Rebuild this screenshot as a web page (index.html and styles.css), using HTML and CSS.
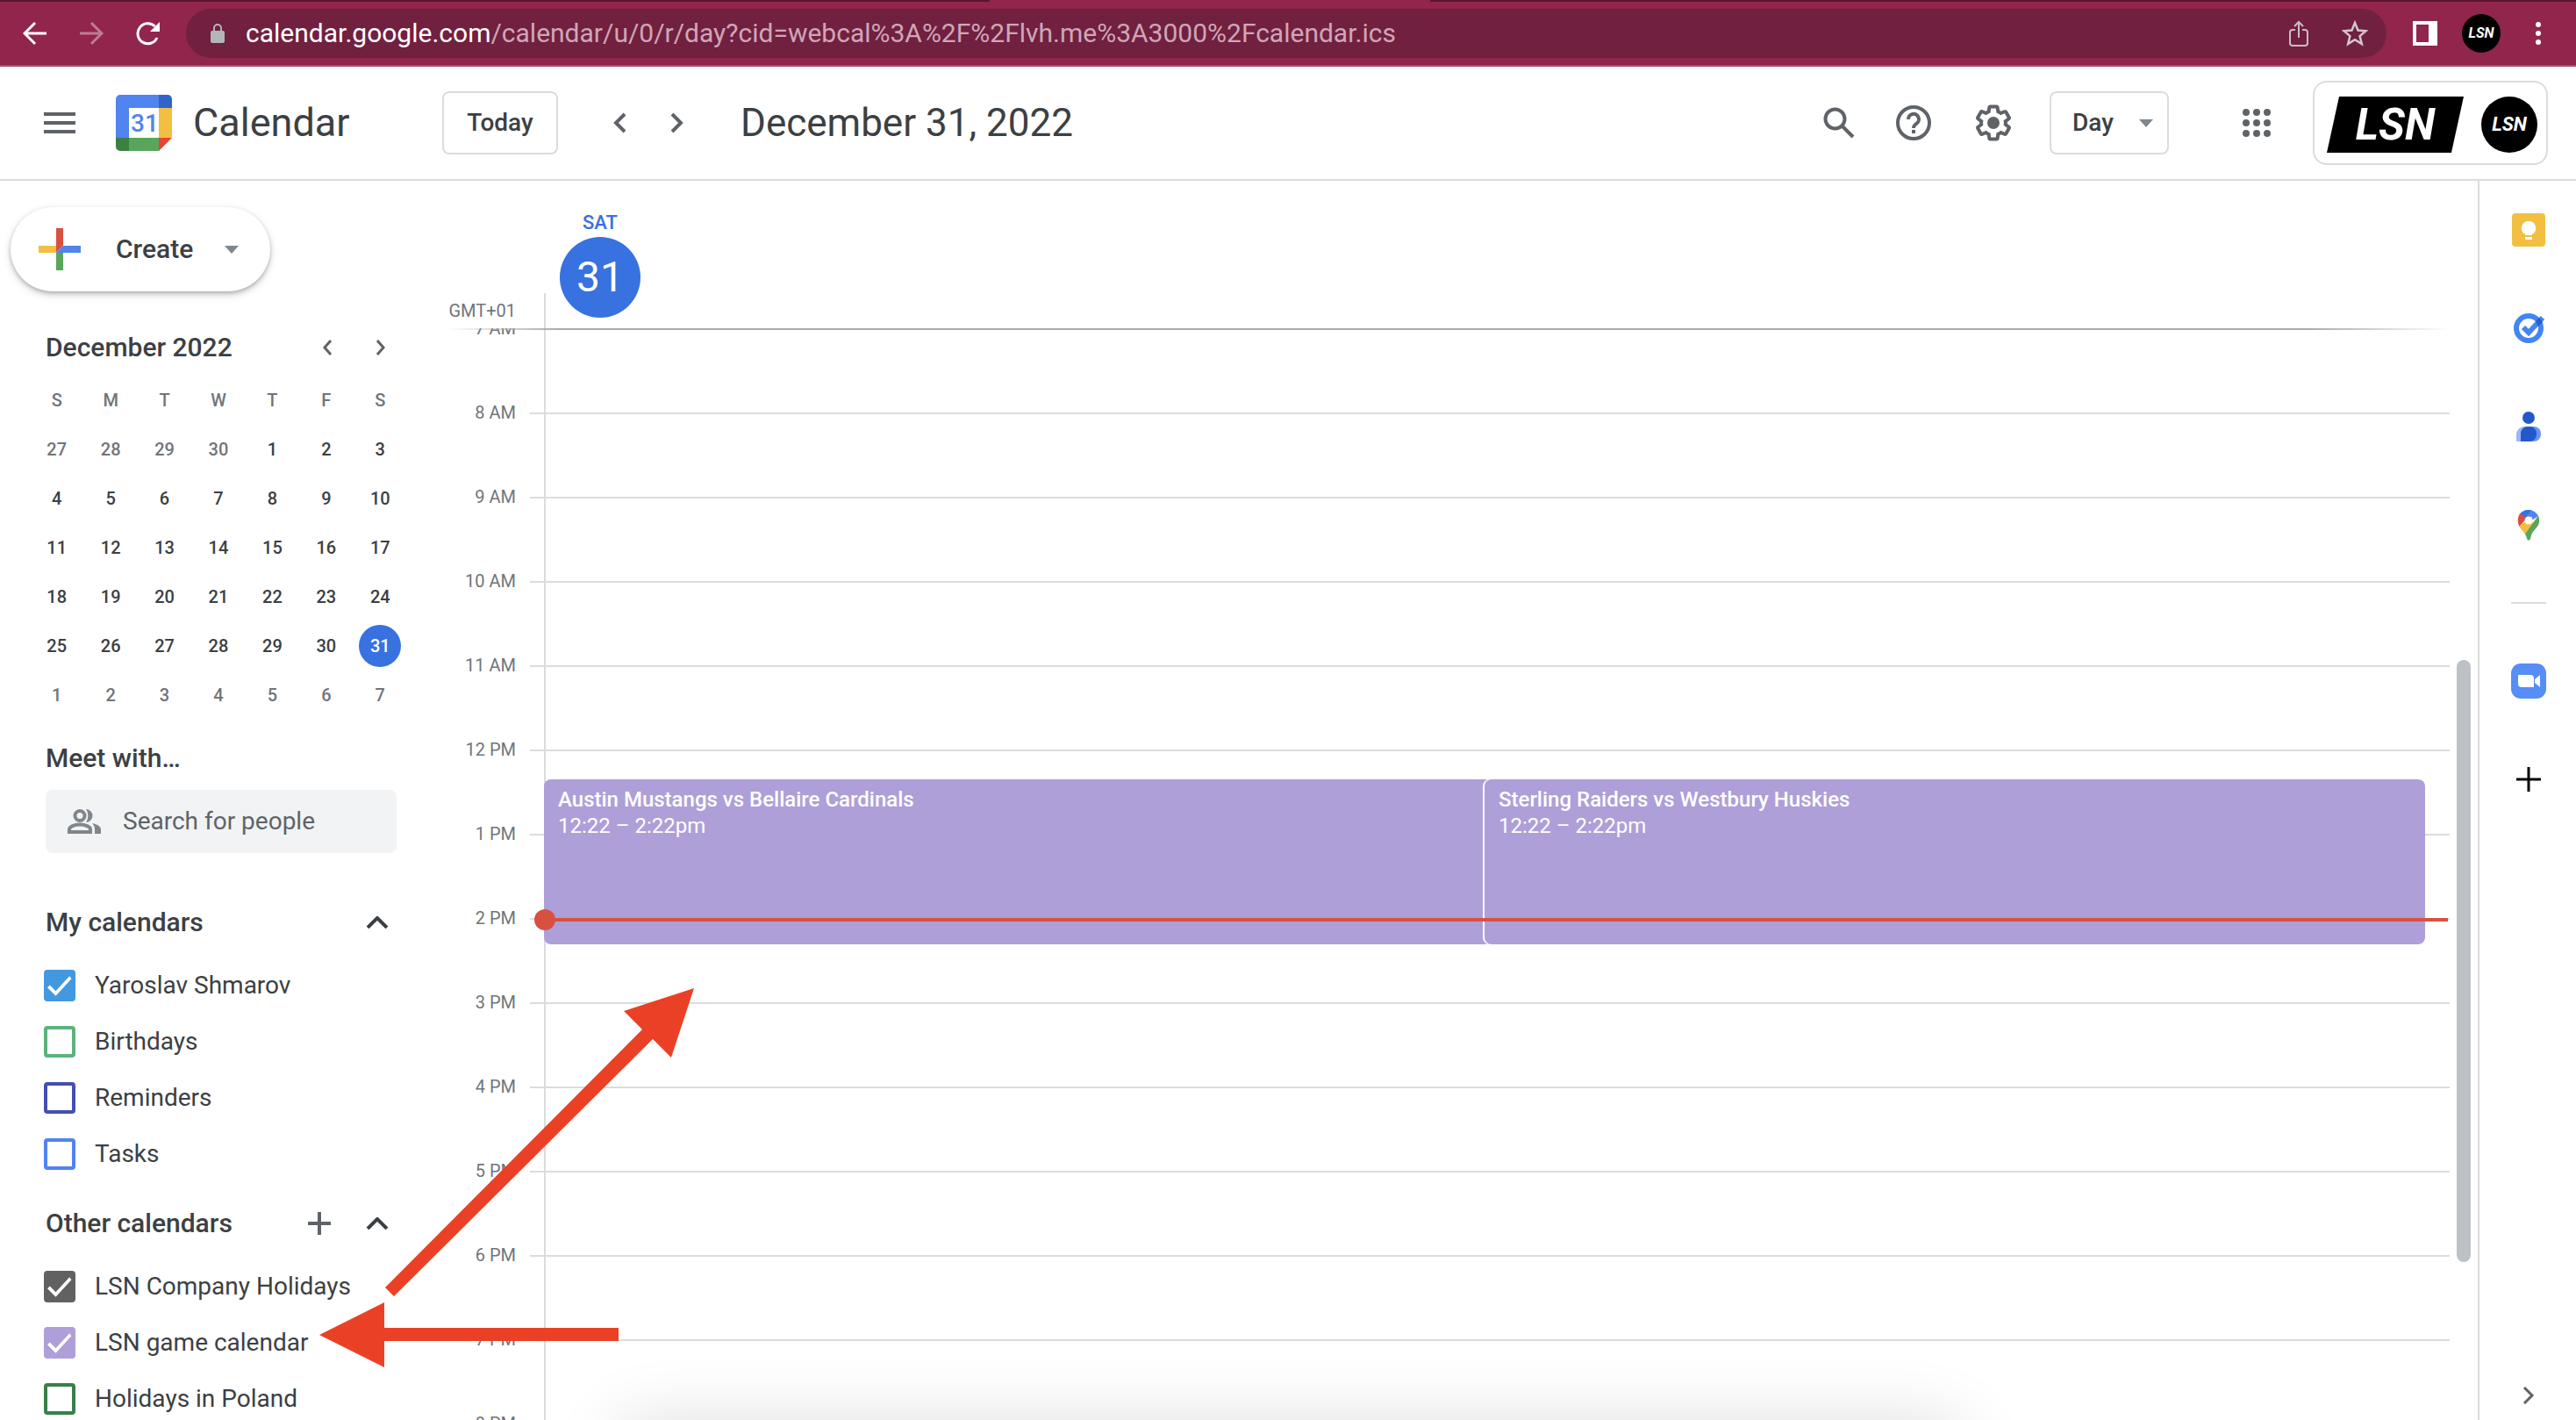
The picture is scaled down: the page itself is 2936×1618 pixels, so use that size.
FILE: index.html
```html
<!DOCTYPE html>
<html lang="en">
<head>
<meta charset="utf-8">
<title>Calendar - December 31, 2022</title>
<link rel="stylesheet" href="styles.css">
</head>
<body>
<div class="browser-bar">
  <nav class="browser-nav" aria-label="Browser">
    <button class="icon-btn" aria-label="Back"><svg width="28" height="28" viewBox="0 0 28 28" fill="none" stroke="#fff" stroke-width="3"><path d="M27 14H3M14 2L2 14l12 12"/></svg></button>
    <button class="icon-btn" aria-label="Forward"><svg width="28" height="28" viewBox="0 0 28 28" fill="none" stroke="#bd7c94" stroke-width="3"><path d="M1 14h24M14 2l12 12-12 12"/></svg></button>
    <button class="icon-btn" aria-label="Reload"><svg width="28" height="28" viewBox="0 0 28 28"><path d="M25 19a11.500 11.500 0 1 1-2.500-13" fill="none" stroke="#fff" stroke-width="3"/><path d="M28 1v11H17z" fill="#fff"/></svg></button>
  </nav>
  <div class="omnibox">
    <svg width="16" height="22" viewBox="0 0 16 22"><rect y="8" width="16" height="14" rx="2" fill="#b3b5ba"/><path d="M4 9V5a4 4 0 0 1 8 0v4" fill="none" stroke="#b3b5ba" stroke-width="2"/></svg>
    <div class="url" role="textbox" aria-label="Address"><span class="url-host">calendar.google.com</span>/calendar/u/0/r/day?cid=webcal%3A%2F%2Flvh.me%3A3000%2Fcalendar.ics</div>
    <button class="icon-btn" aria-label="Share"><svg width="22" height="30" viewBox="0 0 22 30" fill="none" stroke="#c9bcc3" stroke-width="2"><path d="M7 11H4a3 3 0 0 0-3 3v12a3 3 0 0 0 3 3h14a3 3 0 0 0 3-3V14a3 3 0 0 0-3-3h-3M11 20V2M6 7l5-5 5 5"/></svg></button>
    <button class="icon-btn" aria-label="Bookmark"><svg width="30" height="30" viewBox="0 0 30 30" fill="none" stroke="#d3c6cd" stroke-width="2.500"><path d="M15 3l3.500 8.500 9 .7-6.900 5.900 2.200 8.900-7.800-4.800L7.200 27l2.200-8.900-6.900-5.900 9-.7z"/></svg></button>
  </div>
  <div class="browser-actions">
    <button class="icon-btn" aria-label="Side panel"><svg width="28" height="28" viewBox="0 0 28 28"><path fill="#fff" fill-rule="evenodd" d="M0 0h28v28H0zM4 4v20h14V4z"/></svg></button>
    <button class="avatar avatar-small" aria-label="Profile">LSN</button>
    <button class="icon-btn" aria-label="Menu"><svg width="6" height="28" viewBox="0 0 6 28" fill="#fff"><circle cx="3" cy="4" r="3"/><circle cx="3" cy="14" r="3"/><circle cx="3" cy="24" r="3"/></svg></button>
  </div>
</div>

<header class="app-header">
  <button class="icon-btn menu-btn" aria-label="Main menu"><svg width="36" height="24" viewBox="0 0 36 24" fill="#5f6368"><path d="M0 0h36v4H0zM0 10h36v4H0zM0 20h36v4H0z"/></svg></button>
  <a class="brand" href="#">
    <svg width="64" height="64" viewBox="0 0 64 64"><path d="M5 0h44v15H15v34H0V5a5 5 0 0 1 5-5z" fill="#5084ee"/><path d="M49 0h10a5 5 0 0 1 5 5v10H49z" fill="#3063cc"/><path d="M49 15h15v34H49z" fill="#f2bf42"/><path d="M15 49h34v15H15z" fill="#58a65c"/><path d="M0 49h15v15H5a5 5 0 0 1-5-5z" fill="#3d8142"/><path d="M49 49h15L49 64z" fill="#e44535"/><path d="M15 15h34v34H15z" fill="#fff"/><text x="33" y="42" text-anchor="middle" class="brand-day">31</text></svg>
    <span>Calendar</span>
  </a>
  <button class="outline-btn">Today</button>
  <div class="pager">
    <button class="icon-btn" aria-label="Previous day"><svg width="16" height="24" viewBox="0 0 16 24" fill="none" stroke="#5f6368" stroke-width="4"><path d="M14 2L4 12l10 10"/></svg></button>
    <button class="icon-btn" aria-label="Next day"><svg width="16" height="24" viewBox="0 0 16 24" fill="none" stroke="#5f6368" stroke-width="4"><path d="M2 2l10 10L2 22"/></svg></button>
  </div>
  <h1 class="date-title">December 31, 2022</h1>
  <div class="tools">
    <button class="icon-btn" aria-label="Search"><svg width="36" height="36" viewBox="0 0 36 36" fill="none" stroke="#5f6368" stroke-width="4"><circle cx="13.500" cy="13.500" r="11"/><path d="M21 21l13 13"/></svg></button>
    <button class="icon-btn" aria-label="Support"><svg width="40" height="40" viewBox="0 0 40 40"><circle cx="20" cy="20" r="18" fill="none" stroke="#5f6368" stroke-width="4"/><path d="M14 16a6 6 0 1 1 9 5c-2 1.500-3 2.500-3 5" fill="none" stroke="#5f6368" stroke-width="4"/><path d="M18 28h4v4h-4z" fill="#5f6368"/></svg></button>
    <button class="icon-btn settings-btn" aria-label="Settings"><svg width="48" height="48" viewBox="0 0 24 24" fill="#5f6368"><path d="M13.850 22.250h-3.700c-.74 0-1.360-.54-1.450-1.270l-.27-1.890c-.27-.14-.53-.29-.79-.46l-1.800.72c-.7.260-1.470-.03-1.810-.65L2.200 15.530c-.35-.66-.2-1.440.36-1.880l1.530-1.190c-.01-.15-.02-.3-.02-.46 0-.15.010-.31.020-.46l-1.520-1.190c-.59-.45-.74-1.260-.37-1.880l1.850-3.190c.34-.62 1.110-.9 1.790-.63l1.810.73c.26-.17.520-.32.780-.46l.27-1.910c.09-.7.710-1.250 1.440-1.250h3.700c.74 0 1.360.54 1.450 1.270l.27 1.890c.27.140.53.290.79.460l1.800-.72c.71-.26 1.480.03 1.820.65l1.840 3.180c.36.660.2 1.440-.36 1.880l-1.520 1.190c.01.150.02.3.020.46s-.01.310-.02.460l1.520 1.190c.56.450.72 1.230.37 1.860l-1.860 3.220c-.34.620-1.110.9-1.800.63l-1.800-.72c-.26.170-.52.320-.78.460l-.27 1.910c-.1.680-.72 1.220-1.460 1.220zm-3.230-2h2.760l.37-2.550.53-.22c.44-.18.880-.44 1.340-.78l.45-.34 2.380.96 1.380-2.400-2.030-1.580.07-.56c.03-.26.060-.51.060-.78s-.03-.53-.06-.78l-.07-.56 2.030-1.580-1.390-2.400-2.390.96-.45-.35c-.42-.32-.87-.58-1.330-.77l-.52-.22-.37-2.550h-2.760l-.37 2.550-.53.210c-.44.190-.88.440-1.340.79l-.45.330-2.380-.95-1.390 2.390 2.030 1.580-.07.560a7 7 0 0 0-.06.790c0 .26.020.53.060.78l.07.560-2.030 1.580 1.380 2.400 2.390-.96.450.35c.43.330.86.580 1.330.77l.53.220z"/><circle cx="12" cy="12" r="3.500"/></svg></button>
    <div class="view-select"><select aria-label="View"><option>Day</option></select><span class="caret"></span></div>
    <button class="icon-btn apps-btn" aria-label="Google apps"><svg width="32" height="32" viewBox="0 0 32 32" fill="#5f6368"><circle cx="4" cy="4" r="4"/><circle cx="16" cy="4" r="4"/><circle cx="28" cy="4" r="4"/><circle cx="4" cy="16" r="4"/><circle cx="16" cy="16" r="4"/><circle cx="28" cy="16" r="4"/><circle cx="4" cy="28" r="4"/><circle cx="16" cy="28" r="4"/><circle cx="28" cy="28" r="4"/></svg></button>
    <div class="account">
      <span class="org-logo">LSN</span>
      <button class="avatar" aria-label="Google account">LSN</button>
    </div>
  </div>
</header>

<div class="workspace">
  <aside class="sidebar">
    <button class="create-btn">
      <svg width="48" height="48" viewBox="0 0 48 48"><path d="M20 0h8v20l-8 8z" fill="#d85140"/><path d="M0 20h20v8H0z" fill="#f2bf42"/><path d="M20 28h8v20h-8z" fill="#58a65c"/><path d="M28 20h20v8H20z" fill="#5084ee"/></svg>
      <span>Create</span><span class="caret"></span>
    </button>

    <section class="mini">
      <div class="mini-head">
        <h2 class="side-title">December 2022</h2>
        <button class="icon-btn" aria-label="Previous month"><svg width="12" height="18" viewBox="0 0 12 18" fill="none" stroke="#5f6368" stroke-width="3"><path d="M10 1L3 9l7 8"/></svg></button>
        <button class="icon-btn" aria-label="Next month"><svg width="12" height="18" viewBox="0 0 12 18" fill="none" stroke="#5f6368" stroke-width="3"><path d="M2 1l7 8-7 8"/></svg></button>
      </div>
      <table class="month">
        <thead><tr><th>S</th><th>M</th><th>T</th><th>W</th><th>T</th><th>F</th><th>S</th></tr></thead>
        <tbody>
          <tr><td class="dim">27</td><td class="dim">28</td><td class="dim">29</td><td class="dim">30</td><td>1</td><td>2</td><td>3</td></tr>
          <tr><td>4</td><td>5</td><td>6</td><td>7</td><td>8</td><td>9</td><td>10</td></tr>
          <tr><td>11</td><td>12</td><td>13</td><td>14</td><td>15</td><td>16</td><td>17</td></tr>
          <tr><td>18</td><td>19</td><td>20</td><td>21</td><td>22</td><td>23</td><td>24</td></tr>
          <tr><td>25</td><td>26</td><td>27</td><td>28</td><td>29</td><td>30</td><td><span class="today">31</span></td></tr>
          <tr><td class="dim">1</td><td class="dim">2</td><td class="dim">3</td><td class="dim">4</td><td class="dim">5</td><td class="dim">6</td><td class="dim">7</td></tr>
        </tbody>
      </table>
    </section>

    <section class="meet">
      <h2 class="side-title"><label for="people">Meet with…</label></h2>
      <div class="people-field">
        <svg width="38" height="28" viewBox="0 0 38 28"><g fill="none" stroke="#80868b" stroke-width="4"><circle cx="14" cy="7.500" r="5.500"/><path d="M2 26v-3c0-3 6-5.500 12-5.500S26 20 26 23v3z"/></g><path d="M21 0a7.500 7.500 0 0 1 0 15c3-4 3-11 0-15zM28 16c5 1 10 3.500 10 7v5h-7v-5c0-3-1-5-3-7z" fill="#80868b"/></svg>
        <input id="people" type="text" placeholder="Search for people">
      </div>
    </section>

    <section class="cal-group">
      <div class="group-head">
        <h2 class="side-title">My calendars</h2>
        <button class="icon-btn" aria-label="Collapse my calendars"><svg width="26" height="14" viewBox="0 0 26 14" fill="none" stroke="#3c4043" stroke-width="4"><path d="M2 13L13 2l11 11"/></svg></button>
      </div>
      <label class="cal-row"><input class="blue" type="checkbox" checked>Yaroslav Shmarov</label>
      <label class="cal-row"><input class="green" type="checkbox">Birthdays</label>
      <label class="cal-row"><input class="indigo" type="checkbox">Reminders</label>
      <label class="cal-row"><input class="sky" type="checkbox">Tasks</label>
    </section>

    <section class="cal-group">
      <div class="group-head">
        <h2 class="side-title">Other calendars</h2>
        <button class="icon-btn" aria-label="Add other calendars"><svg width="28" height="28" viewBox="0 0 28 28" fill="#5f6368"><path d="M12 1h4v26h-4zM1 12h26v4H1z"/></svg></button>
        <button class="icon-btn" aria-label="Collapse other calendars"><svg width="26" height="14" viewBox="0 0 26 14" fill="none" stroke="#3c4043" stroke-width="4"><path d="M2 13L13 2l11 11"/></svg></button>
      </div>
      <label class="cal-row"><input class="graphite" type="checkbox" checked>LSN Company Holidays</label>
      <label class="cal-row"><input class="lavender" type="checkbox" checked>LSN game calendar</label>
      <label class="cal-row"><input class="forest" type="checkbox">Holidays in Poland</label>
    </section>
  </aside>

  <main class="day-view">
    <div class="day-head">
      <span class="zone">GMT+01</span>
      <div class="day-name"><span>SAT</span><strong>31</strong></div>
    </div>
    <div class="scroller">
      <ol class="hours">
        <li><span>7 AM</span></li>
        <li><span>8 AM</span></li>
        <li><span>9 AM</span></li>
        <li><span>10 AM</span></li>
        <li><span>11 AM</span></li>
        <li><span>12 PM</span></li>
        <li><span>1 PM</span></li>
        <li><span>2 PM</span></li>
        <li><span>3 PM</span></li>
        <li><span>4 PM</span></li>
        <li><span>5 PM</span></li>
        <li><span>6 PM</span></li>
        <li><span>7 PM</span></li>
        <li><span>8 PM</span></li>
      </ol>
      <div class="events">
        <article class="event"><h3>Austin Mustangs vs Bellaire Cardinals</h3><p>12:22 – 2:22pm</p></article>
        <article class="event"><h3>Sterling Raiders vs Westbury Huskies</h3><p>12:22 – 2:22pm</p></article>
      </div>
      <div class="now-line"></div>
      <div class="scroll-thumb"></div>
    </div>
    <div class="toast-shadow"></div>
  </main>

  <aside class="side-panel">
    <button class="icon-btn" aria-label="Keep"><svg width="40" height="40" viewBox="0 0 40 40"><rect x="1" y="1" width="38" height="38" rx="4" fill="#f2bf42"/><path d="M20 10a8 8 0 0 0-4 15v1h8v-1a8 8 0 0 0-4-15zM16 28h8v3h-8z" fill="#fff"/></svg></button>
    <button class="icon-btn" aria-label="Tasks"><svg width="40" height="40" viewBox="0 0 40 40"><circle cx="20" cy="20" r="14" fill="none" stroke="#4285f4" stroke-width="6"/><path d="M14 19l6 6L36 8" fill="none" stroke="#4285f4" stroke-width="6"/><path d="M28 12l4-4 4 5-5 5z" fill="#2a5fc8"/></svg></button>
    <button class="icon-btn" aria-label="Contacts"><svg width="40" height="40" viewBox="0 0 40 40"><circle cx="20" cy="10" r="7" fill="#2358cb"/><path d="M6 37v-8a9 9 0 0 1 9-9h6v17z" fill="#9db6f6"/><path d="M18 20h8a8 8 0 0 1 8 8v1a8 8 0 0 1-8 8h-8z" fill="#6a94f3"/><path d="M11 37v-9a8 8 0 0 1 8-8h2a8 8 0 0 1 8 8v1a8 8 0 0 1-8 8z" fill="#2358cb"/></svg></button>
    <button class="icon-btn" aria-label="Maps"><svg width="40" height="40" viewBox="0 0 40 40"><path d="M9.500 8C12 5 16 3 20 3c5 0 9 3 11 7L19 18z" fill="#5084ee"/><path d="M11 7c2-2.500 5-4 9-4h3l-9 12z" fill="#3871e0"/><path d="M10.500 7l7 6-8 9C7 17 7 11 10.500 7z" fill="#d85140"/><path d="M9.500 22L24 10l1 11-9 10c-2-4-5-6-6.500-9z" fill="#f2bf42"/><path d="M31 9.500c3 7 0 12-4 16-3 3-4 6-5 10-1 3-3 3-4 0-.5-2-1-3-2-5z" fill="#58a65c"/><circle cx="20" cy="15" r="4.500" fill="#fff"/></svg></button>
    <hr>
    <button class="icon-btn" aria-label="Zoom"><svg width="40" height="40" viewBox="0 0 40 40"><rect width="40" height="40" rx="11" fill="#568df6"/><path d="M8 13h14a4 4 0 0 1 4 4v10H12a4 4 0 0 1-4-4z" fill="#fff"/><path d="M27 18l6-5v14l-6-5z" fill="#fff"/></svg></button>
    <button class="icon-btn" aria-label="Get add-ons"><svg width="28" height="28" viewBox="0 0 28 28"><path d="M12.500 0h3v28h-3zM0 12.500h28v3H0z"/></svg></button>
    <button class="icon-btn collapse" aria-label="Hide side panel"><svg width="14" height="20" viewBox="0 0 14 20" fill="none" stroke="#5f6368" stroke-width="3"><path d="M2 1l9 9-9 9"/></svg></button>
  </aside>
</div>

<svg class="annotations" viewBox="0 0 430 434" aria-hidden="true" fill="#ea4126">
  <path d="M427 0l-26 79-21-21L85 351 75 341 368 47l-21-21z"/>
  <path d="M0 395l74-37v29h267v15H74v30z"/>
</svg>
</body>
</html>
```
FILE: styles.css
```css
* { box-sizing: border-box; }

body {
  margin: 0;
  height: 100vh;
  display: flex;
  flex-direction: column;
  overflow: hidden;
  position: relative;
  background: #fff;
  color: #3c4043;
  font-family: Roboto, "Liberation Sans", sans-serif;
  font-size: 28px;
  line-height: 32px;
}

button, input, select { font: inherit; color: inherit; }
button { cursor: pointer; }
svg { display: block; flex: none; }
h1, h2, h3, p, ol { margin: 0; padding: 0; font-weight: 400; }

.icon-btn {
  display: flex;
  align-items: center;
  justify-content: center;
  padding: 0;
  border: 0;
  background: none;
}

.caret {
  border: 8px solid transparent;
  border-top: 9px solid #80868b;
  border-bottom: 0;
}

/* Browser toolbar */
.browser-bar {
  flex: none;
  display: flex;
  align-items: center;
  height: 76px;
  padding: 2px 40px 0 26px;
  color: #cfa6b7;
  background:
    linear-gradient(#5c142f, #5c142f) 0 0 / 1128px 2px no-repeat,
    linear-gradient(#5c142f, #5c142f) 100% 0 / calc(100% - 1630px) 2px no-repeat,
    #92254c;
  border-bottom: 2px solid #a54d6e;
}
.browser-nav { display: flex; gap: 36px; margin-right: 30px; }
.omnibox {
  flex: 1;
  display: flex;
  align-items: center;
  height: 56px;
  padding: 0 21px 0 28px;
  border-radius: 28px;
  background: #71203f;
}
.url { flex: 1; margin-left: 24px; font-size: 30px; }
.url-host { color: #fff; }
.omnibox .icon-btn { margin-left: 38px; }
.browser-actions { display: flex; align-items: center; gap: 28px; margin-left: 30px; }
.browser-actions .icon-btn:last-child { margin-left: 12px; }

.avatar {
  display: flex;
  align-items: center;
  justify-content: center;
  width: 64px;
  height: 64px;
  padding: 0;
  border: 0;
  border-radius: 50%;
  background: #000;
  color: #fff;
  font: italic 700 22px/32px "Liberation Sans Narrow", Roboto, sans-serif;
}
.avatar-small { width: 44px; height: 44px; font-size: 16px; }

/* Application header */
.app-header {
  flex: none;
  display: flex;
  align-items: center;
  height: 130px;
  padding: 0 32px 0 50px;
  border-bottom: 2px solid #dadce0;
}
.brand {
  display: flex;
  align-items: center;
  gap: 24px;
  width: 372px;
  margin-left: 46px;
  color: inherit;
  text-decoration: none;
  font-size: 45px;
  line-height: 56px;
}
.brand-day { font: 500 28px Roboto, sans-serif; fill: #5084ee; }
.outline-btn {
  width: 132px;
  height: 72px;
  padding: 0;
  border: 2px solid #dadce0;
  border-radius: 8px;
  background: #fff;
  font-weight: 500;
}
.pager { display: flex; gap: 50px; margin: 0 64px 0 62px; }
.date-title { font-size: 44px; line-height: 56px; }
.tools { display: flex; align-items: center; margin-left: auto; }
.tools > .icon-btn { margin-right: 47px; }
.tools > .settings-btn { margin-right: 40px; }
.view-select {
  display: flex;
  align-items: center;
  position: relative;
  width: 136px;
  height: 72px;
}
.view-select select {
  appearance: none;
  width: 100%;
  height: 100%;
  padding: 0 24px;
  border: 2px solid #dadce0;
  border-radius: 8px;
  background: #fff;
  font-weight: 500;
}
.view-select .caret { position: absolute; right: 18px; pointer-events: none; }
.tools > .apps-btn { margin: 0 48px 0 84px; }
.account {
  display: flex;
  align-items: center;
  justify-content: space-between;
  width: 268px;
  height: 96px;
  padding: 4px 10px 0 14px;
  border: 2px solid #dadce0;
  border-radius: 16px;
}
.org-logo {
  width: 156px;
  height: 64px;
  background: #000;
  clip-path: polygon(9% 0, 100% 0, 91% 100%, 0 100%);
  color: #fff;
  font: italic 700 50px/64px "Liberation Sans Narrow", Roboto, sans-serif;
  text-align: center;
}

.workspace {
  flex: 1;
  min-height: 0;
  display: grid;
  grid-template-columns: 508px 1fr 112px;
}

/* Left column */
.sidebar { overflow: hidden; padding: 30px 56px 0 12px; }
.create-btn {
  display: flex;
  align-items: center;
  width: 296px;
  height: 96px;
  padding: 0 36px 0 32px;
  border: 0;
  border-radius: 48px;
  background: #fff;
  box-shadow: 0 2px 4px rgba(60, 64, 67, .3), 0 4px 10px rgba(60, 64, 67, .2);
  font-size: 30px;
  font-weight: 500;
}
.create-btn svg { margin-right: 40px; }
.create-btn .caret { margin-left: auto; }
.side-title { font-size: 30px; font-weight: 500; }
.mini { margin-top: 48px; }
.mini-head { display: flex; align-items: center; padding: 0 12px 0 40px; }
.mini-head .side-title { margin-right: auto; }
.mini-head .icon-btn { margin-left: 49px; }
.month {
  width: 430px;
  margin: 16px 0 0 22px;
  border-collapse: collapse;
  table-layout: fixed;
  font-size: 20px;
  line-height: 24px;
  font-weight: 500;
  text-align: center;
}
.month th, .month td { height: 56px; padding: 0; }
.month th, .month .dim { color: #70757a; font-weight: 500; }
.today {
  display: block;
  width: 48px;
  margin: 0 auto;
  border-radius: 50%;
  background: #3871e0;
  color: #fff;
  line-height: 48px;
}
.meet { margin: 28px 0 0 40px; }
.people-field {
  display: flex;
  align-items: center;
  gap: 25px;
  height: 72px;
  margin-top: 20px;
  padding-left: 25px;
  border-radius: 8px;
  background: #f1f3f4;
}
.people-field input { width: 280px; padding: 0; border: 0; background: none; }
.people-field input::placeholder { color: #5f6368; opacity: 1; }
.cal-group { margin: 47px 0 0 38px; }
.cal-group + .cal-group { margin-top: 15px; }
.group-head {
  display: flex;
  align-items: center;
  height: 64px;
  margin-bottom: 8px;
  padding: 0 9px 0 2px;
}
.group-head .side-title { margin-right: auto; }
.group-head .icon-btn + .icon-btn { margin-left: 39px; }
.cal-row { display: flex; align-items: center; gap: 22px; height: 64px; white-space: nowrap; }
.cal-row input {
  appearance: none;
  flex: none;
  width: 36px;
  height: 36px;
  margin: 0;
  border: 4px solid;
  border-radius: 4px;
}
.cal-row input:checked { background: currentColor; }
.cal-row input:checked::after {
  content: "";
  display: block;
  width: 28px;
  height: 28px;
  background: #fff;
  clip-path: polygon(10% 48%, 0 58%, 34% 92%, 98% 22%, 90% 12%, 34% 72%);
}
.blue { color: #4498e0; }
.green { color: #5bb37d; }
.indigo { color: #444fb0; }
.sky { color: #5184f0; }
.graphite { color: #616161; }
.lavender { color: #ae9fd8; }
.forest { color: #38804a; }

/* Day grid */
.day-view {
  display: flex;
  flex-direction: column;
  min-width: 0;
  min-height: 0;
  position: relative;
  overflow: hidden;
}
.day-head {
  flex: none;
  display: flex;
  height: 168px;
  color: #70757a;
  background: linear-gradient(#dadce0, #dadce0) 112px 100% / 2px 40px no-repeat;
}
.zone { width: 80px; margin-top: 136px; font-size: 20px; line-height: 24px; text-align: right; }
.day-name {
  display: flex;
  flex-direction: column;
  align-items: center;
  width: 92px;
  margin: 34px 0 0 50px;
  color: #3871e0;
  font-size: 22px;
  line-height: 28px;
  font-weight: 500;
}
.day-name strong {
  width: 92px;
  margin-top: 2px;
  border-radius: 50%;
  background: #3871e0;
  color: #fff;
  font-size: 48px;
  line-height: 92px;
  font-weight: 400;
  text-align: center;
}
.scroller {
  flex: 1;
  min-height: 0;
  position: relative;
  overflow: hidden;
}
.scroller::before {
  content: "";
  position: absolute;
  z-index: 1;
  inset: 0 32px auto 0;
  height: 2px;
  background: linear-gradient(90deg, transparent, #a8aaac 130px, #a8aaac calc(100% - 160px), transparent);
}
.hours {
  list-style: none;
  background: linear-gradient(#dadce0, #dadce0) 112px 0 / 2px 100% no-repeat;
}
.hours li { display: flex; gap: 16px; height: 96px; padding-right: 32px; }
.hours li::after { content: ""; flex: 1; height: 2px; background: #dadce0; }
.hours li:first-child::after { visibility: hidden; }
.hours span {
  width: 80px;
  margin-top: -12px;
  color: #70757a;
  font-size: 20px;
  line-height: 24px;
  text-align: right;
}
.events {
  position: absolute;
  top: 514px;
  left: 112px;
  right: 60px;
  display: grid;
  grid-template-columns: 1fr 1fr;
  height: 188px;
}
.event {
  padding: 8px 16px;
  border-radius: 8px;
  background: #ae9fd8;
  color: #fff;
  font-size: 24px;
  line-height: 30px;
}
.event:first-child { margin-right: -8px; }
.event:last-child { box-shadow: -2px 0 #fff; }
.event h3 { font-size: 24px; font-weight: 500; }
.now-line {
  position: absolute;
  top: 672px;
  left: 112px;
  right: 34px;
  height: 4px;
  background: #d85140;
}
.now-line::before {
  content: "";
  position: absolute;
  top: -10px;
  left: -11px;
  width: 24px;
  height: 24px;
  border-radius: 50%;
  background: #d85140;
}
.scroll-thumb {
  position: absolute;
  top: 378px;
  right: 8px;
  width: 16px;
  height: 686px;
  border-radius: 8px;
  background: #bdc1c6;
}
.toast-shadow {
  position: absolute;
  left: 200px;
  right: 592px;
  top: 100%;
  height: 80px;
  box-shadow: 0 4px 80px rgba(0, 0, 0, .14);
}

/* Add-on rail */
.side-panel {
  display: flex;
  flex-direction: column;
  align-items: center;
  padding: 36px 0 18px 2px;
  border-left: 2px solid #dadce0;
}
.side-panel .icon-btn { height: 40px; margin-bottom: 72px; }
.side-panel hr { width: 40px; margin: -4px 0 68px; border: 0; border-top: 2px solid #dadce0; }
.side-panel .collapse { height: 20px; margin: auto 0 0; }

.annotations { position: absolute; top: 1126px; left: 364px; width: 430px; height: 434px; }
```
